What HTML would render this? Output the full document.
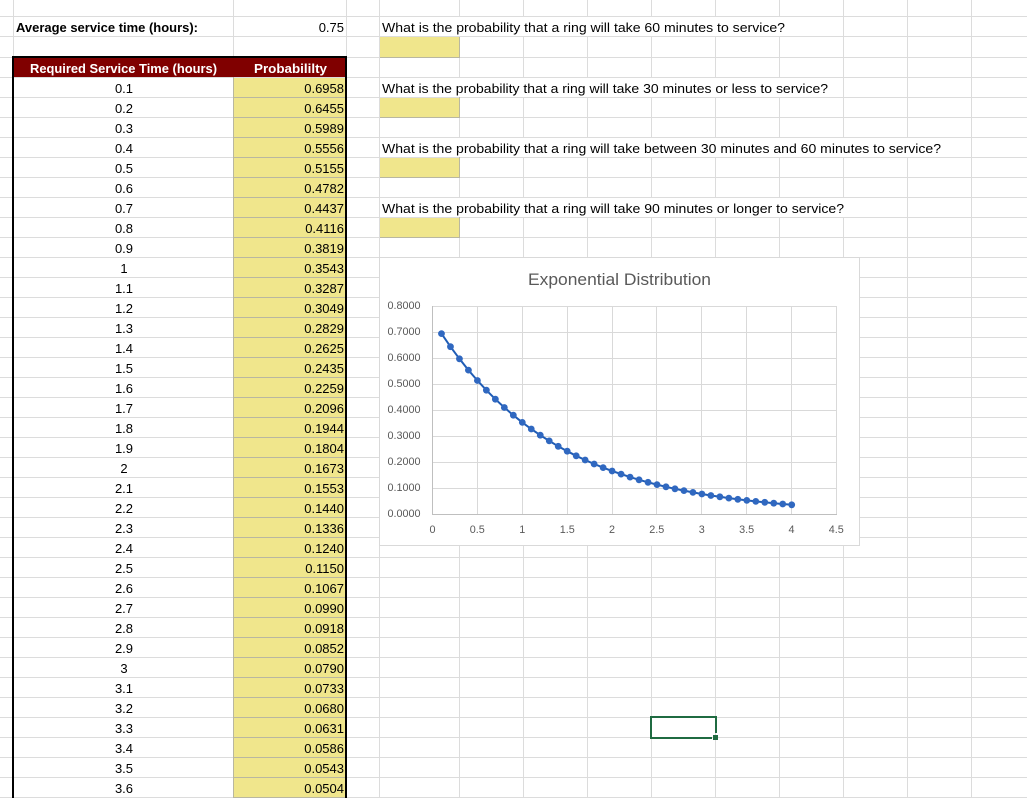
<!DOCTYPE html>
<html lang="en">
<head>
<meta charset="utf-8">
<title>Exponential Distribution</title>
<style>
html,body{margin:0;padding:0;background:#fff;width:1027px;height:798px;overflow:hidden}
svg{display:block}
text{font-family:"Liberation Sans",sans-serif;font-size:13px;fill:#000}
.b{font-weight:bold}
.h{font-weight:bold;fill:#fff}
.c{text-anchor:middle}
.r{text-anchor:end}
.t{font-size:10.8px;fill:#595959}
</style>
</head>
<body>
<svg xmlns="http://www.w3.org/2000/svg" width="1027" height="798" viewBox="0 0 1027 798">
<rect width="1027" height="798" fill="#fff"/>
<path shape-rendering="crispEdges" stroke="#dcdcdc" stroke-width="1" fill="none" d="M0 16.5H1027M0 36.5H1027M0 57.5H1027M0 77.5H1027M0 97.5H1027M0 117.5H1027M0 137.5H1027M0 157.5H1027M0 177.5H1027M0 197.5H1027M0 217.5H1027M0 237.5H1027M0 257.5H1027M0 277.5H1027M0 297.5H1027M0 317.5H1027M0 337.5H1027M0 357.5H1027M0 377.5H1027M0 397.5H1027M0 417.5H1027M0 437.5H1027M0 457.5H1027M0 477.5H1027M0 497.5H1027M0 517.5H1027M0 537.5H1027M0 557.5H1027M0 577.5H1027M0 597.5H1027M0 617.5H1027M0 637.5H1027M0 657.5H1027M0 677.5H1027M0 697.5H1027M0 717.5H1027M0 737.5H1027M0 757.5H1027M0 777.5H1027M0 797.5H1027M13.5 0V798M233.5 0V798M346.5 0V798M379.5 0V798M459.5 0V798M523.5 0V798M587.5 0V798M651.5 0V798M715.5 0V798M779.5 0V798M843.5 0V798M907.5 0V798M971.5 0V798"/>
<g shape-rendering="crispEdges" fill="#fff">
<rect x="380" y="17" width="463" height="19"/>
<rect x="380" y="78" width="463" height="19"/>
<rect x="380" y="138" width="591" height="19"/>
<rect x="380" y="198" width="527" height="19"/>
</g>
<g shape-rendering="crispEdges" fill="#f0e68c">
<rect x="380" y="37" width="79" height="20"/>
<rect x="380" y="98" width="79" height="19"/>
<rect x="380" y="158" width="79" height="19"/>
<rect x="380" y="218" width="79" height="19"/>
<rect x="234" y="78" width="111" height="720"/>
</g>
<path shape-rendering="crispEdges" stroke="#b9b7a0" stroke-width="1" fill="none" d="M380 57.5H460M459.5 37V58M380 117.5H460M459.5 97V118M380 177.5H460M459.5 157V178M380 237.5H460M459.5 217V238M233.5 77V798M234 97.5H345M234 117.5H345M234 137.5H345M234 157.5H345M234 177.5H345M234 197.5H345M234 217.5H345M234 237.5H345M234 257.5H345M234 277.5H345M234 297.5H345M234 317.5H345M234 337.5H345M234 357.5H345M234 377.5H345M234 397.5H345M234 417.5H345M234 437.5H345M234 457.5H345M234 477.5H345M234 497.5H345M234 517.5H345M234 537.5H345M234 557.5H345M234 577.5H345M234 597.5H345M234 617.5H345M234 637.5H345M234 657.5H345M234 677.5H345M234 697.5H345M234 717.5H345M234 737.5H345M234 757.5H345M234 777.5H345M234 797.5H345"/>
<g shape-rendering="crispEdges">
<rect x="14" y="58" width="331" height="19" fill="#800000"/>
<rect x="12" y="56" width="335" height="2" fill="#000"/>
<rect x="12" y="56" width="2" height="742" fill="#000"/>
<rect x="345" y="56" width="2" height="742" fill="#000"/>
</g>
<text class="b" x="16" y="32" textLength="182" lengthAdjust="spacingAndGlyphs">Average service time (hours):</text>
<text class="r" x="344" y="32">0.75</text>
<text x="382" y="32" textLength="403" lengthAdjust="spacingAndGlyphs">What is the probability that a ring will take 60 minutes to service?</text>
<text x="382" y="93" textLength="446" lengthAdjust="spacingAndGlyphs">What is the probability that a ring will take 30 minutes or less to service?</text>
<text x="382" y="153" textLength="559" lengthAdjust="spacingAndGlyphs">What is the probability that a ring will take between 30 minutes and 60 minutes to service?</text>
<text x="382" y="213" textLength="462" lengthAdjust="spacingAndGlyphs">What is the probability that a ring will take 90 minutes or longer to service?</text>
<text class="h" x="30" y="73" textLength="187" lengthAdjust="spacingAndGlyphs">Required Service Time (hours)</text>
<text class="h" x="254" y="73" textLength="73" lengthAdjust="spacingAndGlyphs">Probabililty</text>
<g class="col">
<text class="c" x="124" y="93">0.1</text><text class="r" x="344" y="93">0.6958</text>
<text class="c" x="124" y="113">0.2</text><text class="r" x="344" y="113">0.6455</text>
<text class="c" x="124" y="133">0.3</text><text class="r" x="344" y="133">0.5989</text>
<text class="c" x="124" y="153">0.4</text><text class="r" x="344" y="153">0.5556</text>
<text class="c" x="124" y="173">0.5</text><text class="r" x="344" y="173">0.5155</text>
<text class="c" x="124" y="193">0.6</text><text class="r" x="344" y="193">0.4782</text>
<text class="c" x="124" y="213">0.7</text><text class="r" x="344" y="213">0.4437</text>
<text class="c" x="124" y="233">0.8</text><text class="r" x="344" y="233">0.4116</text>
<text class="c" x="124" y="253">0.9</text><text class="r" x="344" y="253">0.3819</text>
<text class="c" x="124" y="273">1</text><text class="r" x="344" y="273">0.3543</text>
<text class="c" x="124" y="293">1.1</text><text class="r" x="344" y="293">0.3287</text>
<text class="c" x="124" y="313">1.2</text><text class="r" x="344" y="313">0.3049</text>
<text class="c" x="124" y="333">1.3</text><text class="r" x="344" y="333">0.2829</text>
<text class="c" x="124" y="353">1.4</text><text class="r" x="344" y="353">0.2625</text>
<text class="c" x="124" y="373">1.5</text><text class="r" x="344" y="373">0.2435</text>
<text class="c" x="124" y="393">1.6</text><text class="r" x="344" y="393">0.2259</text>
<text class="c" x="124" y="413">1.7</text><text class="r" x="344" y="413">0.2096</text>
<text class="c" x="124" y="433">1.8</text><text class="r" x="344" y="433">0.1944</text>
<text class="c" x="124" y="453">1.9</text><text class="r" x="344" y="453">0.1804</text>
<text class="c" x="124" y="473">2</text><text class="r" x="344" y="473">0.1673</text>
<text class="c" x="124" y="493">2.1</text><text class="r" x="344" y="493">0.1553</text>
<text class="c" x="124" y="513">2.2</text><text class="r" x="344" y="513">0.1440</text>
<text class="c" x="124" y="533">2.3</text><text class="r" x="344" y="533">0.1336</text>
<text class="c" x="124" y="553">2.4</text><text class="r" x="344" y="553">0.1240</text>
<text class="c" x="124" y="573">2.5</text><text class="r" x="344" y="573">0.1150</text>
<text class="c" x="124" y="593">2.6</text><text class="r" x="344" y="593">0.1067</text>
<text class="c" x="124" y="613">2.7</text><text class="r" x="344" y="613">0.0990</text>
<text class="c" x="124" y="633">2.8</text><text class="r" x="344" y="633">0.0918</text>
<text class="c" x="124" y="653">2.9</text><text class="r" x="344" y="653">0.0852</text>
<text class="c" x="124" y="673">3</text><text class="r" x="344" y="673">0.0790</text>
<text class="c" x="124" y="693">3.1</text><text class="r" x="344" y="693">0.0733</text>
<text class="c" x="124" y="713">3.2</text><text class="r" x="344" y="713">0.0680</text>
<text class="c" x="124" y="733">3.3</text><text class="r" x="344" y="733">0.0631</text>
<text class="c" x="124" y="753">3.4</text><text class="r" x="344" y="753">0.0586</text>
<text class="c" x="124" y="773">3.5</text><text class="r" x="344" y="773">0.0543</text>
<text class="c" x="124" y="793">3.6</text><text class="r" x="344" y="793">0.0504</text>
</g>
<rect x="379.5" y="257.5" width="480" height="288" fill="#fff" stroke="#d9d9d9" stroke-width="1" shape-rendering="crispEdges"/>
<text x="528" y="285" textLength="183" lengthAdjust="spacingAndGlyphs" style="font-size:16.5px;fill:#595959">Exponential Distribution</text>
<path shape-rendering="crispEdges" stroke="#d9d9d9" stroke-width="1" fill="none" d="M432 306.5H837M432 332.5H837M432 358.5H837M432 384.5H837M432 410.5H837M432 436.5H837M432 462.5H837M432 488.5H837M477.5 306V514M522.5 306V514M567.5 306V514M612.5 306V514M656.5 306V514M701.5 306V514M746.5 306V514M791.5 306V514M836.5 306V514"/>
<path shape-rendering="crispEdges" stroke="#bfbfbf" stroke-width="1" fill="none" d="M432.5 306V515M432 514.5H837"/>
<g class="t">
<text class="t r" x="420.5" y="309">0.8000</text>
<text class="t r" x="420.5" y="335">0.7000</text>
<text class="t r" x="420.5" y="361">0.6000</text>
<text class="t r" x="420.5" y="387">0.5000</text>
<text class="t r" x="420.5" y="413">0.4000</text>
<text class="t r" x="420.5" y="439">0.3000</text>
<text class="t r" x="420.5" y="465">0.2000</text>
<text class="t r" x="420.5" y="491">0.1000</text>
<text class="t r" x="420.5" y="517">0.0000</text>
<text class="t c" x="432.5" y="533">0</text>
<text class="t c" x="477.3" y="533">0.5</text>
<text class="t c" x="522.3" y="533">1</text>
<text class="t c" x="567.2" y="533">1.5</text>
<text class="t c" x="612" y="533">2</text>
<text class="t c" x="656.8" y="533">2.5</text>
<text class="t c" x="701.7" y="533">3</text>
<text class="t c" x="746.6" y="533">3.5</text>
<text class="t c" x="791.5" y="533">4</text>
<text class="t c" x="836.3" y="533">4.5</text>
</g>
<g transform="translate(432.5 0) scale(.9978 1) translate(-432.5 0)">
<polyline fill="none" stroke="#1f5cb5" stroke-width="2" points="441.5,333.6 450.5,346.7 459.5,358.8 468.5,370.1 477.5,380.5 486.5,390.2 495.5,399.2 504.5,407.5 513.5,415.2 522.5,422.4 531.5,429 540.5,435.2 549.5,440.9 558.5,446.3 567.5,451.2 576.5,455.8 585.5,460 594.5,464 603.5,467.6 612.5,471 621.5,474.1 630.5,477.1 639.5,479.8 648.5,482.3 657.5,484.6 666.5,486.8 675.5,488.8 684.5,490.6 693.5,492.4 702.5,494 711.5,495.5 720.5,496.8 729.5,498.1 738.5,499.3 747.5,500.4 756.5,501.4 765.5,502.3 774.5,503.2 783.5,504 792.5,504.8"/>
<g fill="#3068c0">
<circle cx="441.5" cy="333.6" r="3.4"/><circle cx="450.5" cy="346.7" r="3.4"/><circle cx="459.5" cy="358.8" r="3.4"/><circle cx="468.5" cy="370.1" r="3.4"/><circle cx="477.5" cy="380.5" r="3.4"/><circle cx="486.5" cy="390.2" r="3.4"/><circle cx="495.5" cy="399.2" r="3.4"/><circle cx="504.5" cy="407.5" r="3.4"/><circle cx="513.5" cy="415.2" r="3.4"/><circle cx="522.5" cy="422.4" r="3.4"/><circle cx="531.5" cy="429" r="3.4"/><circle cx="540.5" cy="435.2" r="3.4"/><circle cx="549.5" cy="440.9" r="3.4"/><circle cx="558.5" cy="446.3" r="3.4"/><circle cx="567.5" cy="451.2" r="3.4"/><circle cx="576.5" cy="455.8" r="3.4"/><circle cx="585.5" cy="460" r="3.4"/><circle cx="594.5" cy="464" r="3.4"/><circle cx="603.5" cy="467.6" r="3.4"/><circle cx="612.5" cy="471" r="3.4"/><circle cx="621.5" cy="474.1" r="3.4"/><circle cx="630.5" cy="477.1" r="3.4"/><circle cx="639.5" cy="479.8" r="3.4"/><circle cx="648.5" cy="482.3" r="3.4"/><circle cx="657.5" cy="484.6" r="3.4"/><circle cx="666.5" cy="486.8" r="3.4"/><circle cx="675.5" cy="488.8" r="3.4"/><circle cx="684.5" cy="490.6" r="3.4"/><circle cx="693.5" cy="492.4" r="3.4"/><circle cx="702.5" cy="494" r="3.4"/><circle cx="711.5" cy="495.5" r="3.4"/><circle cx="720.5" cy="496.8" r="3.4"/><circle cx="729.5" cy="498.1" r="3.4"/><circle cx="738.5" cy="499.3" r="3.4"/><circle cx="747.5" cy="500.4" r="3.4"/><circle cx="756.5" cy="501.4" r="3.4"/><circle cx="765.5" cy="502.3" r="3.4"/><circle cx="774.5" cy="503.2" r="3.4"/><circle cx="783.5" cy="504" r="3.4"/><circle cx="792.5" cy="504.8" r="3.4"/>
</g>
</g>
<g shape-rendering="crispEdges" fill="#1f6b41">
<rect x="650" y="716" width="67" height="2"/>
<rect x="650" y="716" width="2" height="23"/>
<rect x="650" y="737" width="62" height="2"/>
<rect x="715" y="716" width="2" height="17"/>
<rect x="713" y="735" width="5" height="5"/>
</g>
</svg>
</body>
</html>
